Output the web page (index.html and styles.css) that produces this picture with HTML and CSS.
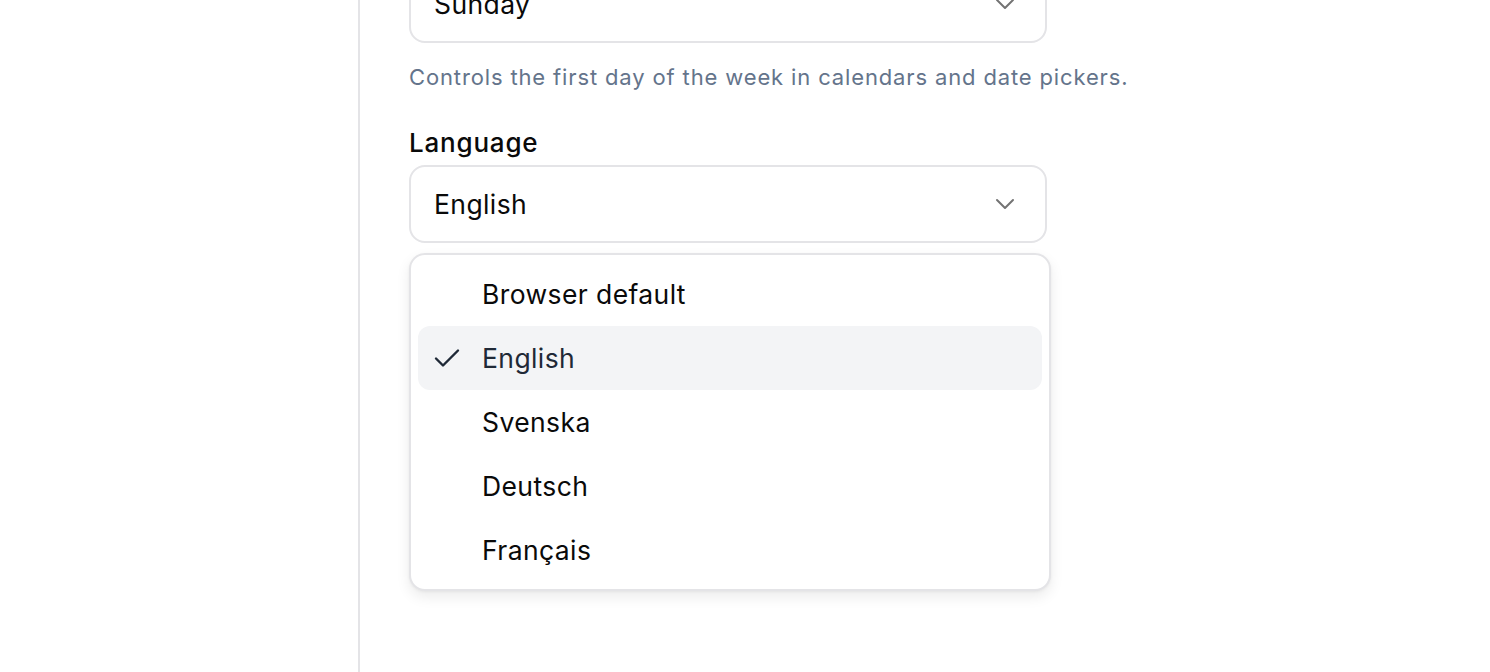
FILE: index.html
```html
<!DOCTYPE html>
<html lang="en">
<head>
<meta charset="utf-8">
<title>Settings</title>
<link rel="stylesheet" href="styles.css">
</head>
<body>
<div class="layout">
  <aside class="sidebar"></aside>
  <main class="content">
    <div class="field field-first">
      <div class="select">
        <span class="select-value">Sunday</span>
        <svg class="chevron" width="20" height="12" viewBox="0 0 20 12"><path d="M2 2 L10 10 L18 2" fill="none" stroke="#737373" stroke-width="2" stroke-linecap="round" stroke-linejoin="round"/></svg>
      </div>
      <p class="help">Controls the first day of the week in calendars and date pickers.</p>
    </div>
    <div class="field">
      <label class="label">Language</label>
      <div class="select-wrap">
        <div class="select">
          <span class="select-value">English</span>
          <svg class="chevron" width="20" height="12" viewBox="0 0 20 12"><path d="M2 2 L10 10 L18 2" fill="none" stroke="#737373" stroke-width="2" stroke-linecap="round" stroke-linejoin="round"/></svg>
        </div>
        <ul class="menu">
          <li class="item">Browser default</li>
          <li class="item item-active">
            <svg class="check" width="26" height="20" viewBox="0 0 26 20"><path d="M2 10.5 L9 17.5 L24 2.5" fill="none" stroke="#1f2937" stroke-width="2.4" stroke-linecap="round" stroke-linejoin="round"/></svg>
            English
          </li>
          <li class="item">Svenska</li>
          <li class="item">Deutsch</li>
          <li class="item">Français</li>
        </ul>
      </div>
    </div>
  </main>
</div>
</body>
</html>
```

FILE: styles.css
```css
* { box-sizing: border-box; }
html, body {
  margin: 0;
  padding: 0;
  background: #ffffff;
  font-family: Inter, "Noto Sans", "Liberation Sans", sans-serif;
  color: #0a0a0a;
  height: 100%;
  overflow: hidden;
}
.layout {
  display: flex;
  height: 672px;
}
.sidebar {
  width: 360px;
  flex: none;
  border-right: 2px solid #e4e4e7;
}
.content {
  padding-left: 49px;
  flex: 1;
}
.field-first {
  margin-top: -35px;
}
.select {
  width: 638px;
  height: 78px;
  border: 2px solid #e4e4e7;
  border-radius: 16px;
  display: flex;
  align-items: center;
  justify-content: space-between;
  padding: 0 30px 0 23px;
  background: #fff;
}
.select-value {
  font-size: 26.5px;
  letter-spacing: 0.4px;
  color: #0a0a0a;
}
.chevron { display: block; }
.help {
  margin: 19px 0 0 0;
  font-size: 22px;
  line-height: 30px;
  color: #64748b;
  letter-spacing: 0.86px;
}
.field + .field { margin-top: 35px; }
.label {
  display: block;
  font-size: 26px;
  font-weight: 500;
  letter-spacing: 0.8px;
  line-height: 32px;
  margin-bottom: 6px;
}
.select-wrap {
  position: relative;
}
.menu {
  position: absolute;
  top: calc(100% + 10px);
  left: 0;
  width: 642px;
  margin: 0;
  list-style: none;
  padding: 7px;
  border: 2px solid #e4e4e7;
  border-radius: 16px;
  background: #fff;
  box-shadow: 0 6px 14px rgba(0, 0, 0, 0.08), 0 1px 3px rgba(0, 0, 0, 0.05);
}
.item {
  height: 64px;
  display: flex;
  align-items: center;
  padding-left: 64px;
  font-size: 26.5px;
  letter-spacing: 0.4px;
  color: #0a0a0a;
  border-radius: 12px;
  position: relative;
}
.item-active {
  background: #f3f4f6;
  color: #1f2937;
}
.check {
  position: absolute;
  left: 16px;
  top: 22px;
}
```
